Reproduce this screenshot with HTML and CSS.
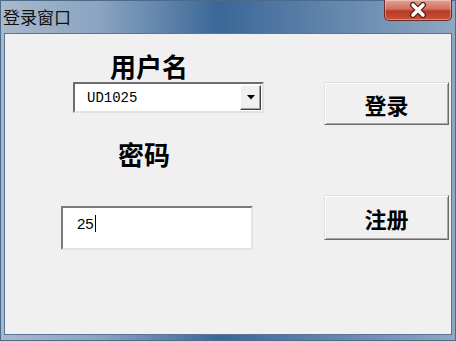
FILE: index.html
```html
<!DOCTYPE html>
<html lang="zh-CN">
<head>
    <meta charset="UTF-8">
    <title>登录窗口</title>
    <link rel="stylesheet" href="styles.css">
</head>
<body>
    <div class="window">
        <div class="titlebar">
            <span class="title">登录窗口</span>
            <div class="close">
                <svg width="22" height="16" viewBox="0 0 22 16">
                    <path d="M6 3 L16 13 M16 3 L6 13" stroke="#5a1a12" stroke-width="6" stroke-linecap="round"/>
                    <path d="M6 3 L16 13 M16 3 L6 13" stroke="#fff" stroke-width="3.6" stroke-linecap="round"/>
                </svg>
            </div>
        </div>
        <div class="client">
            <div class="left">
                <h2 class="label user">用户名</h2>
                <div class="combo">
                    <span class="value">UD1025</span>
                    <span class="drop"><svg width="8" height="5" viewBox="0 0 8 5"><path d="M0 0 H8 L4 4.5 Z" fill="#000"/></svg></span>
                </div>
                <h2 class="label pass">密码</h2>
                <div class="input"><span>25</span><i class="caret"></i></div>
            </div>
            <div class="right">
                <button class="btn login">登录</button>
                <button class="btn reg">注册</button>
            </div>
        </div>
    </div>
</body>
</html>
```

FILE: styles.css
```css
*{
    margin: 0;
    padding: 0;
    box-sizing: border-box;
}
body{
    width: 456px;
    height: 341px;
    overflow: hidden;
    font-family: "Noto Sans CJK SC", sans-serif;
}
.window{
    width: 456px;
    height: 341px;
    background: linear-gradient(90deg, #a7b9cc 0%, #8aa3c0 22%, #3a6797 48%, #5a7fa8 68%, #8ea7c3 100%);
    border: 1px solid #4c6a8c;
    display: flex;
    flex-direction: column;
}
.titlebar{
    height: 32px;
    display: flex;
    align-items: flex-start;
    justify-content: space-between;
}
.title{
    font-size: 17px;
    line-height: 31px;
    color: #111;
    margin-left: 2px;
}
.close{
    width: 68px;
    height: 21px;
    margin-right: 3px;
    margin-top: -1px;
    border: 1px solid #6b2a22;
    border-top: none;
    border-radius: 0 0 5px 5px;
    background: linear-gradient(180deg, #e3a092 0%, #d2705e 45%, #b83a26 55%, #c8503a 100%);
    box-shadow: inset 0 0 0 1px rgba(255,255,255,0.35);
    display: flex;
    align-items: center;
    justify-content: center;
}
.client{
    flex: 1;
    margin: 0 3px 5px 3px;
    background: #f0f0f0;
    border: 1px solid #5a7594;
    display: flex;
}
.left{
    width: 318px;
}
.label{
    font-size: 26px;
    line-height: 28px;
    font-weight: bold;
    color: #000;
}
.user{
    margin: 18px 0 0 105px;
}
.combo{
    margin: 2px 0 0 68px;
    width: 191px;
    height: 31px;
    background: #fff;
    border: 2px solid;
    border-color: #6e6e6e #e2e2e2 #e2e2e2 #6e6e6e;
    display: flex;
    align-items: center;
    justify-content: space-between;
}
.value{
    font-family: "Liberation Mono", monospace;
    font-size: 14px;
    margin-left: 12px;
    color: #000;
}
.drop{
    width: 21px;
    height: 25px;
    margin-right: 1px;
    background: #f0f0f0;
    border: 1px solid;
    border-color: #fff #444 #444 #fff;
    box-shadow: inset -1px -1px #a0a0a0;
    display: flex;
    align-items: center;
    justify-content: center;
}
.pass{
    margin: 27px 0 0 113px;
}
.input{
    margin: 38px 0 0 56px;
    width: 192px;
    height: 44px;
    background: #fff;
    border: 2px solid;
    border-color: #7a7a7a #e4e4e4 #e4e4e4 #7a7a7a;
    display: flex;
    align-items: flex-start;
    padding: 7px 0 0 14px;
    font-family: "Liberation Sans", sans-serif;
    font-size: 15px;
}
.caret{
    display: inline-block;
    width: 1px;
    height: 17px;
    margin-left: 1px;
    background: #000;
}
.right{
    display: flex;
    flex-direction: column;
}
.btn{
    width: 125px;
    margin-left: 1px;
    background: #f0f0f0;
    border: 1px solid;
    border-color: #e0e0e0 #6a6a6a #6a6a6a #e0e0e0;
    box-shadow: inset 1px 1px #fff, inset -1px -1px #a8a8a8;
    font-family: "Noto Sans CJK SC", sans-serif;
    font-weight: bold;
    font-size: 22px;
    color: #000;
}
.login{
    height: 43px;
    margin-top: 48px;
}
.reg{
    height: 45px;
    margin-top: 70px;
}
```
